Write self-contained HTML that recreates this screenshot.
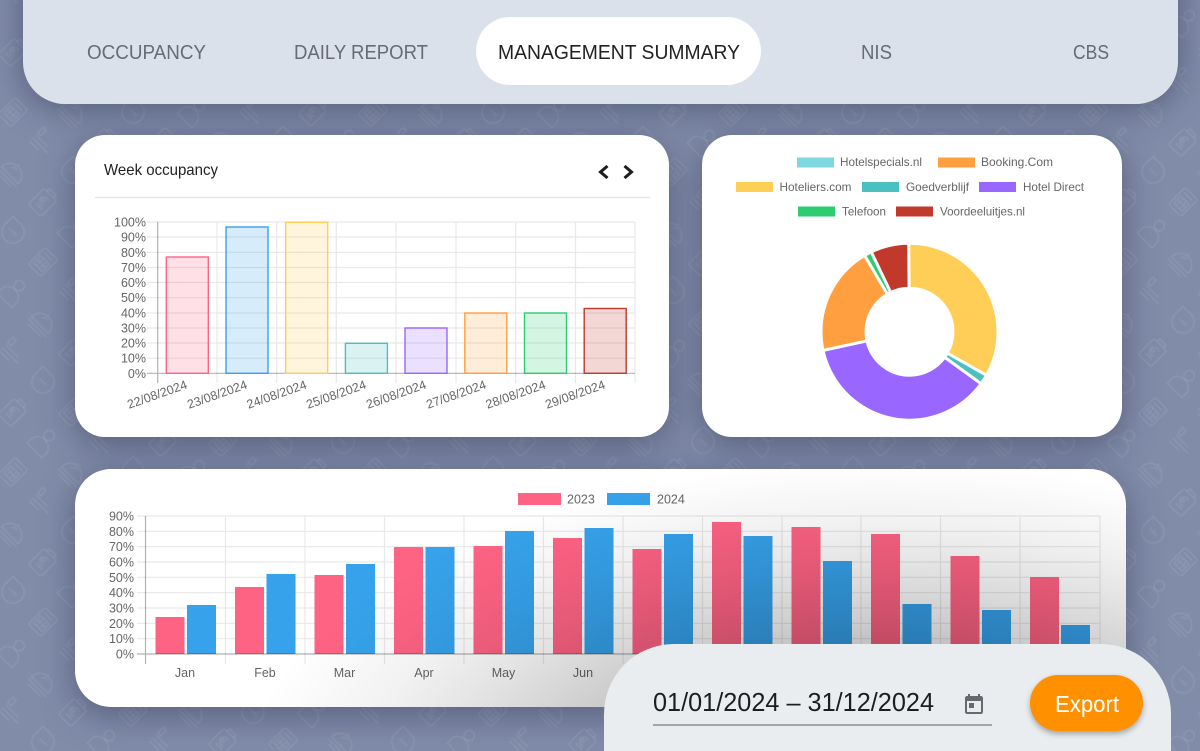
<!DOCTYPE html>
<html><head><meta charset="utf-8"><style>
html,body{margin:0;padding:0;background:#818ca9;overflow:hidden;width:1200px;height:751px}
#root{position:relative;width:1200px;height:751px;overflow:hidden;background:#818ca9;font-family:"Liberation Sans",sans-serif}
#root>*{position:absolute}
svg{display:block;position:absolute;left:0;top:0;overflow:hidden}
.bar{left:23px;top:-60px;width:1155px;height:164px;border-radius:42px;background:#dbe1ea;box-shadow:0 4px 34px rgba(45,52,82,.55)}
.pillt{left:476px;top:17px;width:285px;height:68px;border-radius:34px;background:#fff}
.card{background:#fff;box-shadow:0 8px 34px rgba(45,52,82,.5);overflow:hidden}
.c1{left:75px;top:135px;width:594px;height:302px;border-radius:30px}
.c2{left:702px;top:135px;width:420px;height:302px;border-radius:30px}
.c3{left:75px;top:469px;width:1051px;height:238px;border-radius:36px}
.sh{position:absolute;left:0;top:0;width:1051px;height:238px;background:radial-gradient(640px 330px at 805px 321px,rgba(0,0,0,.25) 0%,rgba(0,0,0,.24) 45%,rgba(0,0,0,.2) 51%,rgba(0,0,0,.1) 70%,rgba(0,0,0,.05) 82%,rgba(0,0,0,0) 100%)}
.date{left:604px;top:644px;width:567px;height:107px;border-radius:70px 70px 0 0;background:#e9edf0}
.btn{left:1030px;top:675px;width:113px;height:56px;border-radius:28px;background:#ff9100;box-shadow:0 3px 6px rgba(0,0,0,.3)}
.tab{font-size:20px;fill:#666c75}
.cl{font-size:12.5px;fill:#666}
.lg{font-size:12px;fill:#666}
</style></head><body>
<div id="root">
<svg width="1200" height="751" viewBox="0 0 1200 751" style="filter:blur(.4px)">
<defs>
<g id="i0" transform="rotate(45) scale(.74)"><rect x="-12" y="-16" width="24" height="32" rx="3"/><path d="M-8-10H8M-8-4H8V10H-8ZM-3-4V10M3-4V10M-8 3H8"/></g>
<g id="i1" transform="rotate(45) scale(.74)"><path d="M-16 6A16 16 0 0 1 16 6ZM-18 11H18M-6-2A8 8 0 0 1 2-6M-2-10V-14"/><path d="M-12 16H12"/></g>
<g id="i2" transform="rotate(45) scale(.74)"><path d="M0-15A15 15 0 1 1-15 0V-15ZM-7 0H7M0 0H-3"/></g>
<g id="i3" transform="rotate(45) scale(.74)"><circle cx="0" cy="-12" r="7"/><path d="M-14 16V8A14 12 0 0 1 14 8V16Z"/></g>
<g id="i4" transform="rotate(45) scale(.74)"><path d="M-14-14V-4H-8V-14ZM-14 0H10M-14 6H16M-14 12H4"/></g>
<g id="i5" transform="rotate(45) scale(.74)"><rect x="-12" y="-14" width="24" height="30" rx="3"/><path d="M-6-14V-19H6V-14M-6 8H6M5-6A6 6 0 1 0 5 3M-7-3H2M-7 0H2"/></g>
<g id="R"><use href="#i0" x="0"/><use href="#i1" x="60"/><use href="#i2" x="120"/><use href="#i3" x="180"/><use href="#i4" x="240"/><use href="#i5" x="300"/></g>
<g id="RR"><use href="#R" x="0"/><use href="#R" x="360"/><use href="#R" x="720"/><use href="#R" x="1080"/><use href="#R" x="1440"/></g>
<g id="P"><use href="#RR" x="-227" y="-8"/><use href="#RR" x="-77" y="22"/><use href="#RR" x="-287" y="52"/><use href="#RR" x="-137" y="82"/><use href="#RR" x="-347" y="112"/><use href="#RR" x="-197" y="142"/><use href="#RR" x="-47" y="172"/><use href="#RR" x="-257" y="202"/><use href="#RR" x="-107" y="232"/><use href="#RR" x="-317" y="262"/><use href="#RR" x="-167" y="292"/><use href="#RR" x="-17" y="322"/></g>
</defs>
<g fill="none" stroke="#fff" stroke-opacity=".1" stroke-width="2"><use href="#P"/><use href="#P" y="360"/><use href="#P" y="720"/></g>
</svg>

<div class="bar"></div>
<div class="pillt"></div>
<svg width="1200" height="110" viewBox="0 0 1200 110" style="z-index:1">
<text class="tab" x="87" y="59" textLength="119" lengthAdjust="spacingAndGlyphs">OCCUPANCY</text>
<text class="tab" x="294" y="59" textLength="134" lengthAdjust="spacingAndGlyphs">DAILY REPORT</text>
<text class="tab" x="498" y="59" textLength="242" lengthAdjust="spacingAndGlyphs" style="fill:#222">MANAGEMENT SUMMARY</text>
<text class="tab" x="861" y="59" textLength="31" lengthAdjust="spacingAndGlyphs">NIS</text>
<text class="tab" x="1073" y="59" textLength="36" lengthAdjust="spacingAndGlyphs">CBS</text>
</svg>

<div class="card c1">
<svg width="594" height="302" viewBox="75 135 594 302">
<text x="104" y="175" font-size="16" fill="#222" textLength="114" lengthAdjust="spacingAndGlyphs">Week occupancy</text>
<path d="M95 197.5H650" stroke="#e4e4e4" stroke-width="1.2"/>
<path d="M607.500 166L600.500 172L607.500 178M624.500 166L631.500 172L624.500 178" fill="none" stroke="#1d1d1d" stroke-width="3"/>
<path d="M147 222H635M147 237H635M147 252.3H635M147 267.5H635M147 282.5H635M147 297.7H635M147 313H635M147 328H635M147 343H635M147 358.2H635M217 222V383M276.7 222V383M336.3 222V383M396 222V383M456 222V383M515.7 222V383M575.5 222V383M635 222V383" stroke="#000" stroke-opacity=".09" stroke-width="1.2" fill="none"/>
<path d="M157.7 222V383M147 373.3H635" stroke="#000" stroke-opacity=".3" stroke-width="1.2" fill="none"/>
<g stroke-width="1.4">
<rect x="166.3" y="257" width="42" height="116.3" fill="#ff6384" fill-opacity=".2" stroke="#ff6384"/>
<rect x="226" y="227" width="42" height="146.3" fill="#36a2eb" fill-opacity=".2" stroke="#36a2eb"/>
<rect x="285.7" y="222.3" width="42" height="151" fill="#ffce56" fill-opacity=".2" stroke="#ffce56"/>
<rect x="345.4" y="343.3" width="42" height="30" fill="#4bc0c0" fill-opacity=".2" stroke="#4bc0c0"/>
<rect x="405" y="328" width="42" height="45.3" fill="#9966ff" fill-opacity=".2" stroke="#9966ff"/>
<rect x="464.8" y="313" width="42" height="60.3" fill="#ff9f40" fill-opacity=".2" stroke="#ff9f40"/>
<rect x="524.5" y="313" width="42" height="60.3" fill="#2ecc71" fill-opacity=".2" stroke="#2ecc71"/>
<rect x="584.2" y="308.5" width="42" height="64.8" fill="#c0392b" fill-opacity=".2" stroke="#c0392b"/>
</g>
<g text-anchor="end">
<text class="cl" x="146" y="226.5">100%</text><text class="cl" x="146" y="241.5">90%</text><text class="cl" x="146" y="256.8">80%</text><text class="cl" x="146" y="272">70%</text><text class="cl" x="146" y="287">60%</text><text class="cl" x="146" y="302.2">50%</text><text class="cl" x="146" y="317.5">40%</text><text class="cl" x="146" y="332.5">30%</text><text class="cl" x="146" y="347.5">20%</text><text class="cl" x="146" y="362.7">10%</text><text class="cl" x="146" y="377.8">0%</text>
<text class="cl" transform="translate(188 388) rotate(-19.5)">22/08/2024</text>
<text class="cl" transform="translate(248 388) rotate(-19.5)">23/08/2024</text>
<text class="cl" transform="translate(307.5 388) rotate(-19.5)">24/08/2024</text>
<text class="cl" transform="translate(367 388) rotate(-19.5)">25/08/2024</text>
<text class="cl" transform="translate(427 388) rotate(-19.5)">26/08/2024</text>
<text class="cl" transform="translate(487 388) rotate(-19.5)">27/08/2024</text>
<text class="cl" transform="translate(546.5 388) rotate(-19.5)">28/08/2024</text>
<text class="cl" transform="translate(606 388) rotate(-19.5)">29/08/2024</text>
</g>
</svg>
</div>

<div class="card c2">
<svg width="420" height="302" viewBox="702 135 420 302">
<rect x="797" y="157.500" width="37" height="10" fill="#7ed6df"/><text class="lg" x="840" y="166" textLength="82" lengthAdjust="spacingAndGlyphs">Hotelspecials.nl</text>
<rect x="938" y="157.500" width="37" height="10" fill="#ff9f40"/><text class="lg" x="981" y="166" textLength="72" lengthAdjust="spacingAndGlyphs">Booking.Com</text>
<rect x="736" y="182" width="37" height="10" fill="#ffce56"/><text class="lg" x="779.500" y="191" textLength="72" lengthAdjust="spacingAndGlyphs">Hoteliers.com</text>
<rect x="862" y="182" width="37" height="10" fill="#4bc0c0"/><text class="lg" x="906" y="191" textLength="63" lengthAdjust="spacingAndGlyphs">Goedverblijf</text>
<rect x="979" y="182" width="37" height="10" fill="#9966ff"/><text class="lg" x="1023" y="191" textLength="61" lengthAdjust="spacingAndGlyphs">Hotel Direct</text>
<rect x="798" y="206.500" width="37" height="10" fill="#2ecc71"/><text class="lg" x="842" y="215.500" textLength="44" lengthAdjust="spacingAndGlyphs">Telefoon</text>
<rect x="896" y="206.500" width="37" height="10" fill="#c0392b"/><text class="lg" x="940" y="215.500" textLength="85" lengthAdjust="spacingAndGlyphs">Voordeeluitjes.nl</text>
<g transform="translate(909.5 331.700)">
<g transform="rotate(-90)" fill="none" stroke-width="42">
<circle r="66" pathLength="360" stroke="#ffce56" stroke-dasharray="119.500 360"/>
<circle r="66" pathLength="360" stroke="#4bc0c0" stroke-dasharray="6.500 360" stroke-dashoffset="-119.500"/>
<circle r="66" pathLength="360" stroke="#9966ff" stroke-dasharray="131.800 360" stroke-dashoffset="-126"/>
<circle r="66" pathLength="360" stroke="#ff9f40" stroke-dasharray="71.700 360" stroke-dashoffset="-257.800"/>
<circle r="66" pathLength="360" stroke="#2ecc71" stroke-dasharray="4.900 360" stroke-dashoffset="-329.500"/>
<circle r="66" pathLength="360" stroke="#c0392b" stroke-dasharray="25.600 360" stroke-dashoffset="-334.400"/>
</g>
<g stroke="#fff" stroke-width="3">
<path d="M0-43V-89" transform="rotate(-0.500)"/>
<path d="M0-43V-89" transform="rotate(119.500)"/>
<path d="M0-43V-89" transform="rotate(126)"/>
<path d="M0-43V-89" transform="rotate(257.800)"/>
<path d="M0-43V-89" transform="rotate(329.500)"/>
<path d="M0-43V-89" transform="rotate(334.400)"/>
</g>
</g>
</svg>
</div>

<div class="card c3">
<svg width="1051" height="238" viewBox="75 469 1051 238">
<rect x="518" y="493" width="43" height="12" fill="#ff6384"/><text class="cl" x="567" y="503.500">2023</text>
<rect x="607" y="493" width="43" height="12" fill="#36a2eb"/><text class="cl" x="657" y="503.500">2024</text>
<path d="M137 516H1100M137 531.300H1100M137 546.700H1100M137 562H1100M137 577.300H1100M137 592.700H1100M137 608H1100M137 623.300H1100M137 638.700H1100M225.500 516V664M305 516V664M384.500 516V664M464 516V664M543.500 516V664M623 516V664M702.500 516V664M782 516V664M861 516V664M940.500 516V664M1020 516V664M1100 516V664" stroke="#000" stroke-opacity=".09" stroke-width="1.200" fill="none"/>
<g fill="#ff6384">
<rect x="155.500" y="617" width="29" height="37"/><rect x="235" y="587" width="29" height="67"/><rect x="314.500" y="575" width="29" height="79"/><rect x="394" y="547" width="29" height="107"/><rect x="473.500" y="546" width="29" height="108"/><rect x="553" y="538" width="29" height="116"/><rect x="632.500" y="549" width="29" height="105"/><rect x="712" y="522" width="29" height="132"/><rect x="791.500" y="527" width="29" height="127"/><rect x="871" y="534" width="29" height="120"/><rect x="950.500" y="556" width="29" height="98"/><rect x="1030" y="577" width="29" height="77"/>
</g>
<g fill="#36a2eb">
<rect x="187" y="605" width="29" height="49"/><rect x="266.500" y="574" width="29" height="80"/><rect x="346" y="564" width="29" height="90"/><rect x="425.500" y="547" width="29" height="107"/><rect x="505" y="531" width="29" height="123"/><rect x="584.500" y="528" width="29" height="126"/><rect x="664" y="534" width="29" height="120"/><rect x="743.500" y="536" width="29" height="118"/><rect x="823" y="561" width="29" height="93"/><rect x="902.500" y="604" width="29" height="50"/><rect x="982" y="610" width="29" height="44"/><rect x="1061" y="625" width="29" height="29"/>
</g>
<path d="M145.500 516V664M137 654H1100" stroke="#000" stroke-opacity=".3" stroke-width="1.200" fill="none"/>
<g text-anchor="end">
<text class="cl" x="134" y="520.500">90%</text><text class="cl" x="134" y="535.800">80%</text><text class="cl" x="134" y="551.200">70%</text><text class="cl" x="134" y="566.500">60%</text><text class="cl" x="134" y="581.800">50%</text><text class="cl" x="134" y="597.200">40%</text><text class="cl" x="134" y="612.500">30%</text><text class="cl" x="134" y="627.800">20%</text><text class="cl" x="134" y="643.200">10%</text><text class="cl" x="134" y="658.500">0%</text>
</g>
<g text-anchor="middle">
<text class="cl" x="185" y="677">Jan</text><text class="cl" x="265" y="677">Feb</text><text class="cl" x="344.500" y="677">Mar</text><text class="cl" x="424" y="677">Apr</text><text class="cl" x="503.500" y="677">May</text><text class="cl" x="583" y="677">Jun</text>
</g>
</svg>
<div class="sh"></div>
</div>

<div class="date"></div>
<div class="btn"></div>
<svg width="1200" height="751" viewBox="0 0 1200 751" style="pointer-events:none">
<text x="653" y="711" font-size="26" fill="#1c1f22" textLength="281" lengthAdjust="spacingAndGlyphs">01/01/2024 – 31/12/2024</text>
<path d="M653 725H992" stroke="#777c80" stroke-width="1.300"/>
<path transform="translate(962 692)" fill="#666a6e" d="M19 4h-1V2h-2v2H8V2H6v2H5c-1.110 0-1.990.9-1.990 2L3 20c0 1.100.89 2 2 2h14c1.100 0 2-.9 2-2V6c0-1.100-.9-2-2-2zm0 16H5V9h14v11zM7 11h5v5H7z"/>
<text x="1055" y="712" font-size="23" fill="#fff" textLength="64" lengthAdjust="spacingAndGlyphs">Export</text>
</svg>
</div>
</body></html>
